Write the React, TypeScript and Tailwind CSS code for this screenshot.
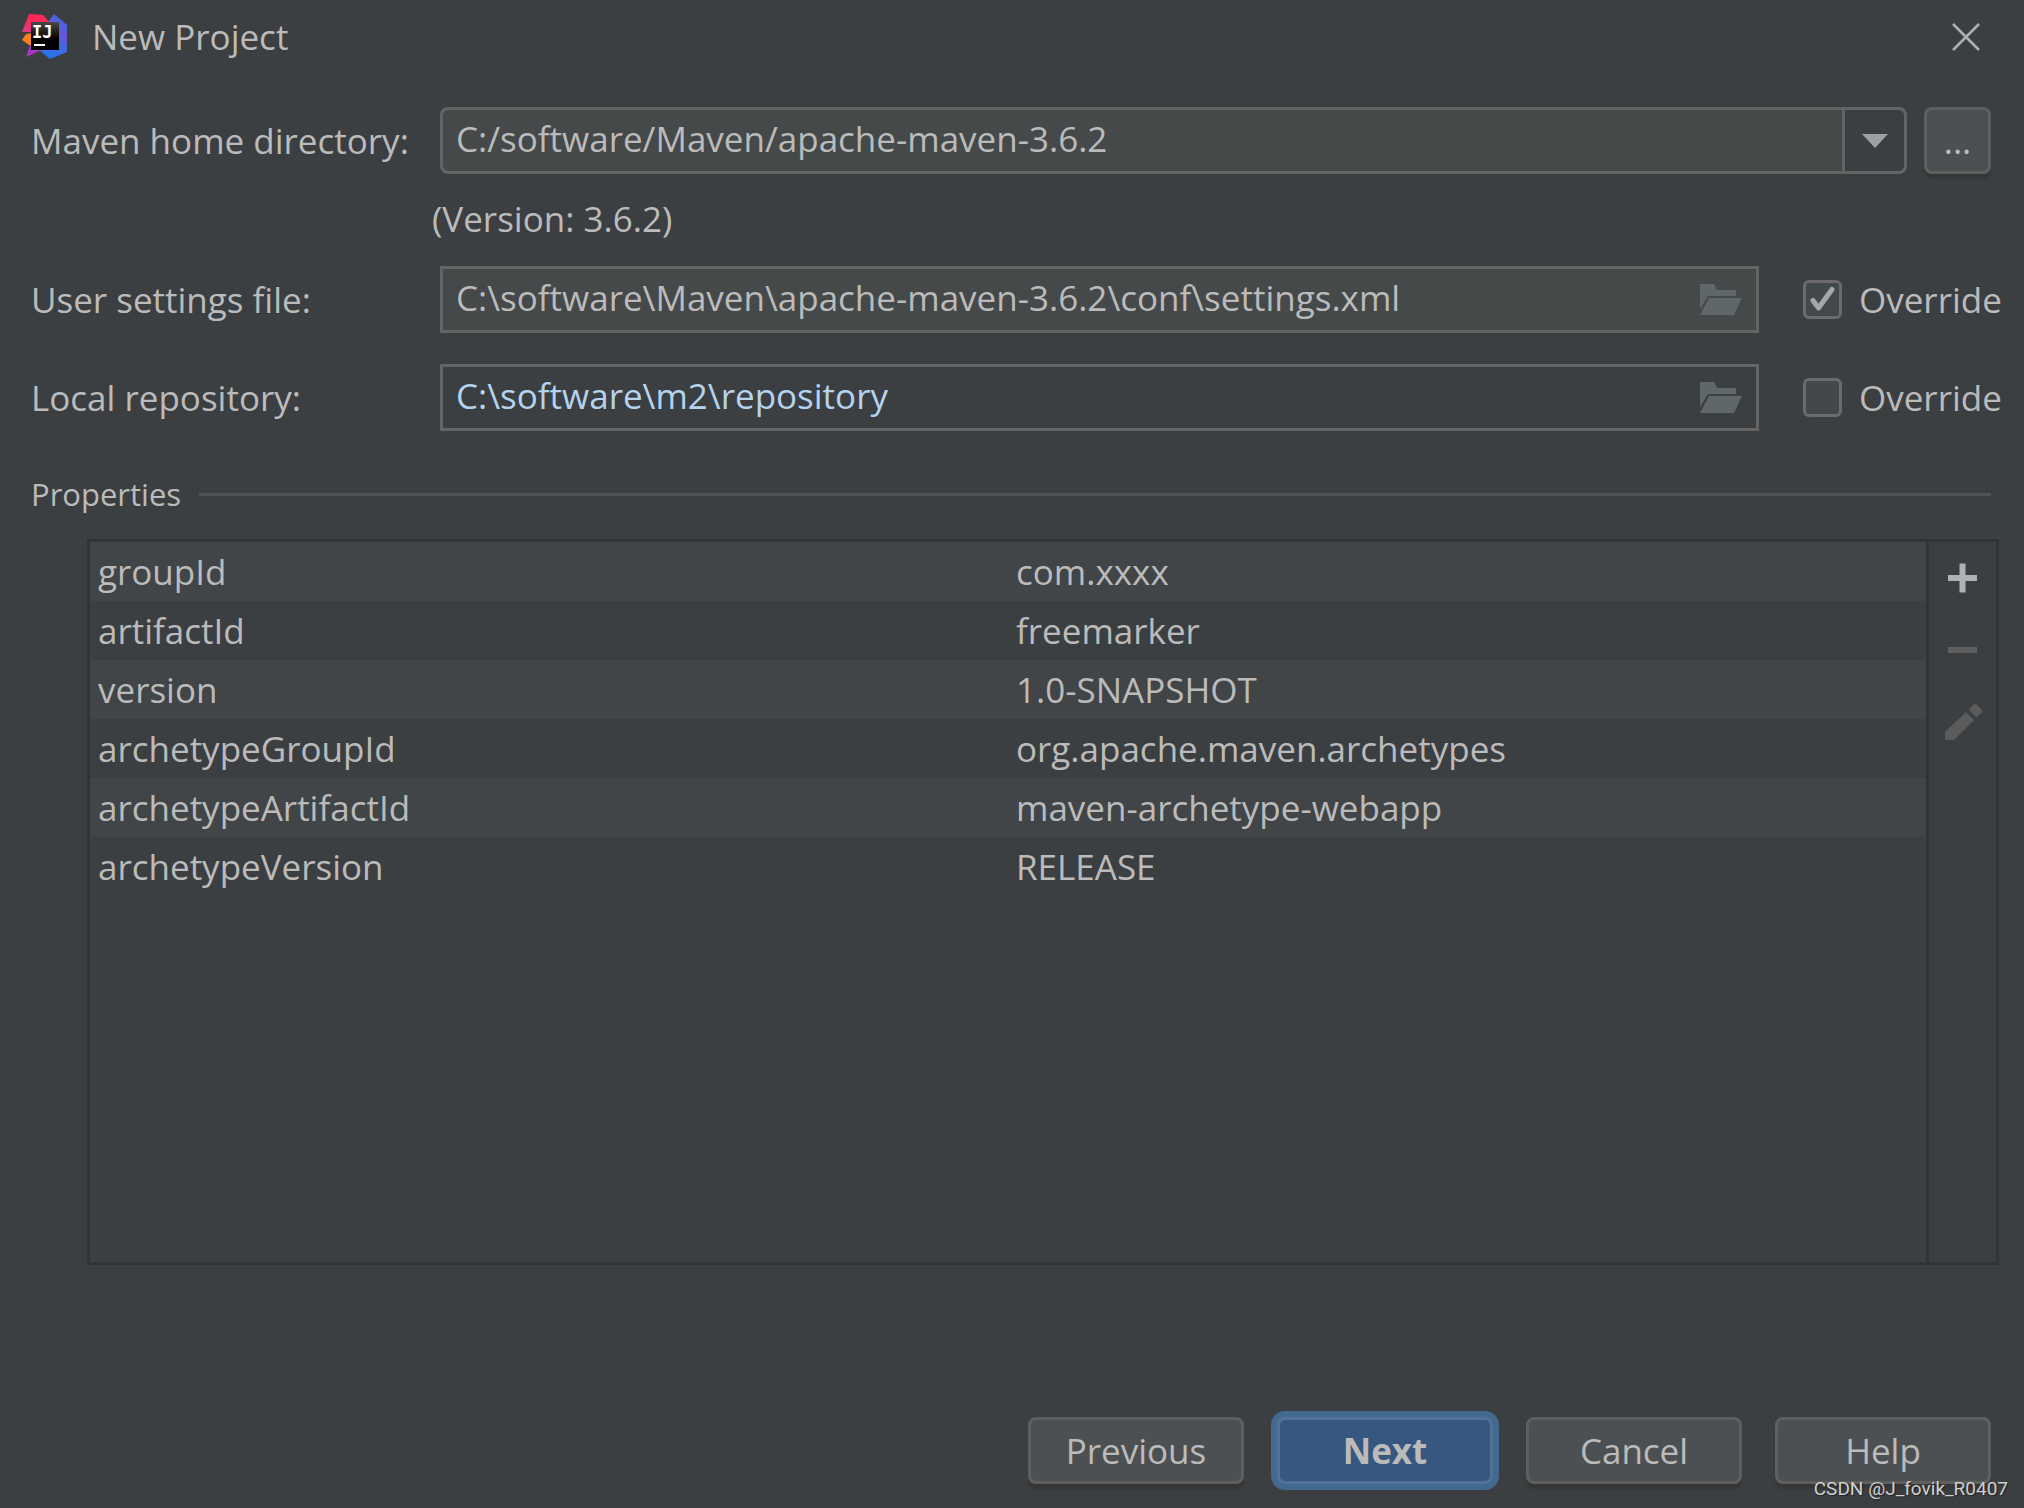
import React, { useState } from "react";

interface MavenProperty {
  name: string;
  value: string;
}

const mavenProperties: MavenProperty[] = [
  { name: "groupId", value: "com.xxxx" },
  { name: "artifactId", value: "freemarker" },
  { name: "version", value: "1.0-SNAPSHOT" },
  { name: "archetypeGroupId", value: "org.apache.maven.archetypes" },
  { name: "archetypeArtifactId", value: "maven-archetype-webapp" },
  { name: "archetypeVersion", value: "RELEASE" },
];

const IdeaLogo = () => (
  <svg width="46" height="46" viewBox="0 0 46 46" aria-hidden="true">
    <defs>
      <linearGradient id="idea-blue" x1="0.9" y1="0.1" x2="0.5" y2="1">
        <stop offset="0" stopColor="#3a6be0" />
        <stop offset="0.35" stopColor="#6a55d8" />
        <stop offset="0.6" stopColor="#3f68e0" />
        <stop offset="1" stopColor="#2673ea" />
      </linearGradient>
      <linearGradient id="idea-red" x1="0.8" y1="0" x2="0.1" y2="1">
        <stop offset="0.4" stopColor="#fe2857" />
        <stop offset="1" stopColor="#d93a86" />
      </linearGradient>
      <linearGradient id="idea-box" x1="0" y1="0" x2="0" y2="1">
        <stop offset="0" stopColor="#4a4a4a" />
        <stop offset="0.6" stopColor="#000000" />
      </linearGradient>
    </defs>
    <path d="M32 0 45 11V38L28 45 17 36 26 8Z" fill="url(#idea-blue)" />
    <path d="M7 0 21 1 28 9 10 18 0 18Z" fill="url(#idea-red)" />
    <path d="M0 26 4 20 10 19V33Z" fill="#fc801d" />
    <path d="M8 31 4 43 25 34Z" fill="#a335c0" />
    <path d="M9 8H37V36H9Z" fill="url(#idea-box)" />
    <text x="10" y="24" fontSize="17" className="fill-white font-['DejaVu_Sans_Mono'] font-bold">IJ</text>
    <path d="M12 30H23V32H12Z" fill="#ffffff" />
  </svg>
);

const FolderIcon = () => (
  <svg width="42" height="32" viewBox="0 0 42 32" fill="#5f676a" aria-hidden="true">
    <path d="M0 0H14L17 6H36V12H8L0 25Z" />
    <path d="M9 14H42L34 31H0Z" />
  </svg>
);

interface PathFieldProps {
  id: string;
  label: string;
  value: string;
  override: boolean;
}

const PathField: React.FC<PathFieldProps> = ({ id, label, value, override }) => {
  const [path, setPath] = useState(value);
  const [checked, setChecked] = useState(override);

  return (
    <div className="flex items-center">
      <label htmlFor={id} className="w-[409px] shrink-0">{label}</label>
      <div className={`flex h-[67px] flex-1 items-center border-3 border-[#646464] pr-[14px] ${checked ? "bg-[#45494a]" : ""}`}>
        <input
          id={id}
          type="text"
          value={path}
          onChange={(e) => setPath(e.target.value)}
          className={`h-full min-w-0 flex-1 bg-transparent pb-1 pl-[13px] outline-none ${checked ? "text-[#bbbbbb]" : "text-[#b4d3ee]"}`}
        />
        <button type="button" aria-label={`Browse ${label}`}>
          <FolderIcon />
        </button>
      </div>
      <label className="ml-[44px] flex w-[196px] shrink-0 items-center gap-[17px]">
        <span className="relative flex size-[39px]">
          <input
            type="checkbox"
            checked={checked}
            onChange={(e) => setChecked(e.target.checked)}
            className="size-[39px] appearance-none rounded-md border-3 border-[#6b6b6b] bg-[#43494a]"
          />
          {checked && (
            <svg className="pointer-events-none absolute inset-0" width="39" height="39" viewBox="0 0 39 39" fill="none" aria-hidden="true">
              <path d="M10 20.5 15.500 28 29 9.500" stroke="#a7a7a7" strokeWidth="5" strokeLinecap="round" strokeLinejoin="round" />
            </svg>
          )}
        </span>
        Override
      </label>
    </div>
  );
};

const footerButton = "h-[67px] w-[216px] rounded-lg border-3";
const plainButton = "border-[#5e6060] bg-[#4c5052] shadow-[0_5px_2px_#373737]";

export default function App() {
  return (
    <div className="relative flex min-h-screen flex-col bg-[#3c3f41] font-['Open_Sans','Noto_Sans',sans-serif] text-[35px] leading-[48px] text-[#bbbbbb]">
      <header className="flex h-[74px] items-center pl-[22px] pr-[44px]">
        <IdeaLogo />
        <h1 className="ml-[24px] flex-1">New Project</h1>
        <button type="button" aria-label="Close">
          <svg width="28" height="28" viewBox="0 0 28 28" aria-hidden="true">
            <path d="M1 1 27 27M27 1 1 27" stroke="#b0b0b0" strokeWidth="2.500" />
          </svg>
        </button>
      </header>

      <main className="flex flex-1 flex-col pb-[152px] pl-[31px] pr-[25px] pt-[33px]">
        <div className="flex items-center pr-2">
          <label htmlFor="maven-home" className="w-[409px] shrink-0">Maven home directory:</label>
          <div className="relative flex h-[67px] flex-1">
            <select
              id="maven-home"
              className="h-full w-full appearance-none rounded-lg border-3 border-[#646464] bg-[#45494a] pb-1 pl-[13px] pr-[70px] outline-none"
            >
              <option>C:/software/Maven/apache-maven-3.6.2</option>
            </select>
            <span className="pointer-events-none absolute inset-y-[3px] right-[3px] flex w-[62px] items-center justify-center rounded-r-md border-l-3 border-[#646464] bg-[#3c3f41]">
              <svg width="26" height="14" viewBox="0 0 26 14" aria-hidden="true">
                <path d="M0 0H26L13 14Z" fill="#9da0a3" />
              </svg>
            </span>
          </div>
          <button type="button" className={`ml-[17px] size-[67px] rounded-lg border-3 ${plainButton}`}>...</button>
        </div>

        <p className="mt-[21px] pl-[401px]">(Version: 3.6.2)</p>

        <div className="mt-[23px] flex flex-col gap-[31px]">
          <PathField id="user-settings" label="User settings file:" value="C:\software\Maven\apache-maven-3.6.2\conf\settings.xml" override={true} />
          <PathField id="local-repo" label="Local repository:" value="C:\software\m2\repository" override={false} />
        </div>

        <div className="mt-[39px] flex items-center gap-[18px] pr-2">
          <h2 className="text-[31px]">Properties</h2>
          <div className="h-[3px] flex-1 bg-[#515151]" />
        </div>

        <div className="ml-[56px] mt-[21px] flex flex-1 border-3 border-[#333333]">
          <div className="flex-1">
            <table className="w-full table-fixed border-collapse">
              <tbody>
                {mavenProperties.map((property) => (
                  <tr key={property.name} className="h-[59px] odd:bg-[#414547]">
                    <td className="px-2">{property.name}</td>
                    <td className="px-2">{property.value}</td>
                  </tr>
                ))}
              </tbody>
            </table>
          </div>
          <div className="flex w-[70px] flex-col items-center gap-[34px] border-l-3 border-[#333333] pt-[17px]">
            <button type="button" aria-label="Add">
              <svg width="38" height="38" viewBox="0 0 38 38" aria-hidden="true">
                <path d="M4 19H33M18.500 4.500V33.500" stroke="#afb1b3" strokeWidth="6" />
              </svg>
            </button>
            <button type="button" aria-label="Remove" disabled>
              <svg width="38" height="38" viewBox="0 0 38 38" aria-hidden="true">
                <path d="M4 19H33" stroke="#5f5f5f" strokeWidth="6" />
              </svg>
            </button>
            <button type="button" aria-label="Edit" disabled>
              <svg width="38" height="38" viewBox="0 0 38 38" fill="#5b5b5b" aria-hidden="true">
                <path d="M1 29 22 9 30 17 10 37H1Z" />
                <path d="M24.500 6.500 29 2Q31 0 33 2L37 6Q39 8 37 10L32.500 14.500Z" />
              </svg>
            </button>
          </div>
        </div>
      </main>

      <footer className="flex justify-end gap-[33px] pb-[24px] pr-[33px]">
        <button type="button" className={`${footerButton} ${plainButton}`}>Previous</button>
        <button type="button" className={`${footerButton} border-[#527297] bg-[#365880] font-bold ring-6 ring-[#43698e]`}>Next</button>
        <button type="button" className={`${footerButton} ${plainButton}`}>Cancel</button>
        <button type="button" className={`${footerButton} ${plainButton}`}>Help</button>
      </footer>

      <div className="pointer-events-none absolute bottom-[7px] right-[16px] font-[Roboto,sans-serif] text-[19px] leading-[24px] text-[#d0d0d0] [text-shadow:1px_1px_1px_#222222]">
        CSDN @J_fovik_R0407
      </div>
    </div>
  );
}
